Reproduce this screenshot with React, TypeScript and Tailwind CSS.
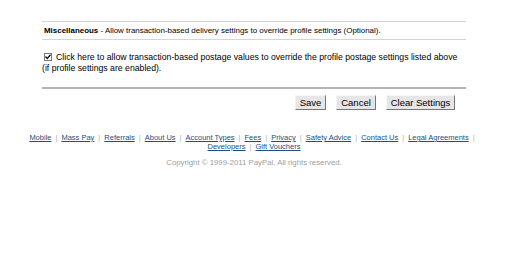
import React from "react";

const links = [
  "Mobile",
  "Mass Pay",
  "Referrals",
  "About Us",
  "Account Types",
  "Fees",
  "Privacy",
  "Safety Advice",
  "Contact Us",
  "Legal Agreements",
];

const Sep = () => <span className="mx-[4px] text-[#b0b0b0]">|</span>;

export default function App() {
  return (
    <div className="w-[520px] h-[258px] bg-white font-['Liberation_Sans',Arial,sans-serif] text-black">
      <div className="pt-[21px] ml-[42px] w-[424px]">
        <div className="border-t border-b border-[#d4d4d4] h-[19px] flex items-center pl-[2px] text-[7.95px]">
          <span className="font-bold">Miscellaneous</span>
          <span>&nbsp;- Allow transaction-based delivery settings to override profile settings (Optional).</span>
        </div>
        <div className="pt-[12px] text-[8.7px] leading-[11px]">
          <label className="flex items-start">
            <span className="w-[8px] h-[8px] mt-[1px] ml-[2px] mr-[4px] border border-[#777] bg-white flex items-center justify-center shrink-0">
              <svg width="6" height="6" viewBox="0 0 6 6">
                <path d="M0.5 2.5 L2.3 4.5 L5.5 0.8" stroke="#111" strokeWidth="1.3" fill="none" />
              </svg>
            </span>
            <span>Click here to allow transaction-based postage values to override the profile postage settings listed above</span>
          </label>
          <div>(if profile settings are enabled).</div>
        </div>
        <div className="mt-[13px] h-[2px] bg-[#b4b4b4]"></div>
        <div className="flex justify-end gap-[10px] mt-[6px] pr-[11px] text-[9.5px]">
          <button className="h-[15px] w-[31px] bg-[#e6e6e6] border border-t-[#f4f4f4] border-l-[#f4f4f4] border-r-[#777] border-b-[#777]">
            Save
          </button>
          <button className="h-[15px] w-[40px] bg-[#e6e6e6] border border-t-[#f4f4f4] border-l-[#f4f4f4] border-r-[#777] border-b-[#777]">
            Cancel
          </button>
          <button className="h-[15px] w-[69px] bg-[#e6e6e6] border border-t-[#f4f4f4] border-l-[#f4f4f4] border-r-[#777] border-b-[#777]">
            Clear Settings
          </button>
        </div>
      </div>
      <div className="w-[508px] mt-[23px] text-center text-[7.5px] leading-[9px]">
        <div>
          {links.map((l) => (
            <React.Fragment key={l}>
              <a href="#" className="text-[#1d4f7f] underline">
                {l}
              </a>
              <Sep />
            </React.Fragment>
          ))}
        </div>
        <div>
          <a href="#" className="text-[#1d4f7f] underline">Developers</a>
          <Sep />
          <a href="#" className="text-[#1d4f7f] underline">Gift Vouchers</a>
        </div>
        <div className="mt-[7px] text-[7.8px] text-[#a0a0a0]">Copyright © 1999-2011 PayPal. All rights reserved.</div>
      </div>
    </div>
  );
}
